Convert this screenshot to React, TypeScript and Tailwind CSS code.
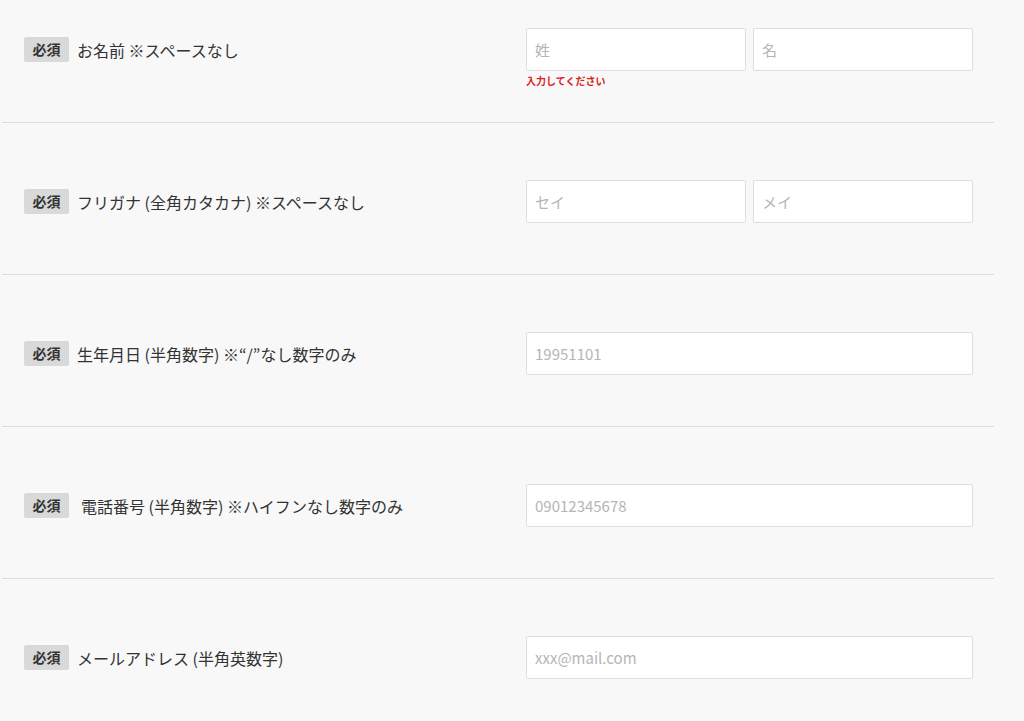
const FONT = { fontFamily: '"Noto Sans CJK JP", "Noto Sans", sans-serif' };

type Row = { label: string; inputs: string[]; error?: string; labelPad?: boolean };

const ROWS: Row[] = [
  { label: "お名前 ※スペースなし", inputs: ["姓", "名"], error: "入力してください" },
  { label: "フリガナ (全角カタカナ) ※スペースなし", inputs: ["セイ", "メイ"] },
  { label: "生年月日 (半角数字) ※“/”なし数字のみ", inputs: ["19951101"] },
  { label: "電話番号 (半角数字) ※ハイフンなし数字のみ", inputs: ["09012345678"], labelPad: true },
  { label: "メールアドレス (半角英数字)", inputs: ["xxx@mail.com"] },
];

export default function App() {
  return (
    <div className="min-h-[721px] w-[1024px] overflow-hidden bg-[#f8f8f8]" style={FONT}>
      {ROWS.map((row, i) => (
        <div
          key={i}
          className={`ml-[2px] w-[992px] border-b border-[#dcdcdc] pb-[51px] ${i === 0 ? "pt-[28px]" : "pt-[57px]"}`}
        >
          <div className="flex items-center">
            <div className="flex w-[524px] items-center pl-[22px]">
              <span className="flex h-[25px] w-[45px] items-center justify-center rounded-[2px] bg-[#d9d9d9] text-[14px] font-bold text-[#333]">
                必須
              </span>
              <span className={`text-[16px] text-[#333] ${row.labelPad ? "ml-[12px]" : "ml-[8px]"}`}>
                {row.label}
              </span>
            </div>
            <div className="relative flex w-[447px] gap-[7px]">
              {row.inputs.map((p) => (
                <input
                  key={p}
                  placeholder={p}
                  className="h-[43px] min-w-0 flex-1 rounded-[2px] border border-[#dedede] bg-white px-[8px] text-[15px] placeholder:text-[#b5b5b5] outline-none"
                />
              ))}
              {row.error && (
                <span className="absolute left-0 top-[45px] text-[10px] font-bold text-[#d81e1e]">
                  {row.error}
                </span>
              )}
            </div>
          </div>
        </div>
      ))}
    </div>
  );
}
